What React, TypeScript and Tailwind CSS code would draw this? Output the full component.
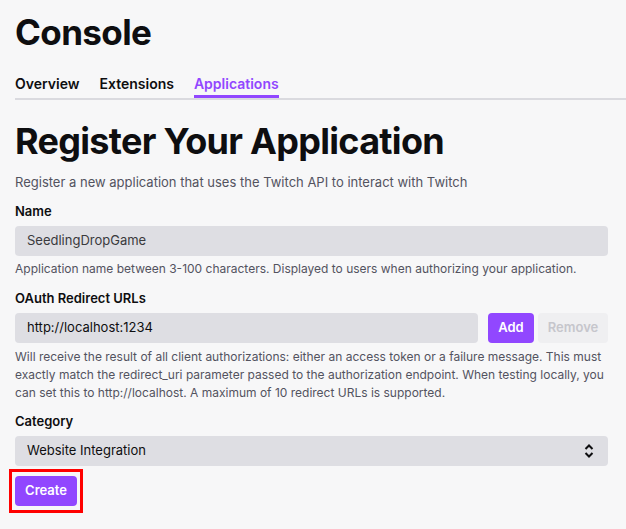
export default function App() {
    return (
        <div className="min-h-[529px] bg-[#f7f7f8] font-['Inter',sans-serif] text-[#0e0e10]">
            <div className="pl-[15px] pr-[18px] pt-[10px]">
                <h1 className="text-[35px] font-bold leading-[44px] tracking-[-0.6px]">Console</h1>

                <div className="mt-[16px] -mr-[18px] flex border-b-2 border-[#dadadf]">
                    <div className="flex gap-[20px] text-[14px] font-semibold leading-[20px]">
                        <div className="pb-[4px] pt-[4px]">Overview</div>
                        <div className="pb-[4px] pt-[4px]">Extensions</div>
                        <div className="pb-[1px] pt-[4px] border-b-[3px] border-[#9147ff] text-[#9147ff]">Applications</div>
                    </div>
                </div>

                <h2 className="mt-[19px] text-[36px] font-bold leading-[44px] tracking-[-0.7px]">Register Your Application</h2>
                <p className="mt-[10px] text-[13px] leading-[18px] text-[#53535f]">
                    Register a new application that uses the Twitch API to interact with Twitch
                </p>

                <label className="mt-[11px] block text-[13px] font-semibold leading-[18px]">Name</label>
                <div className="mt-[6px] flex h-[30px] items-center rounded bg-[#dedee3] px-[12px] text-[13px] text-[#3a3a3d]">
                    SeedlingDropGame
                </div>
                <p className="mt-[4px] text-[12px] leading-[18px] text-[#53535f]">
                    Application name between 3-100 characters. Displayed to users when authorizing your application.
                </p>

                <label className="mt-[11px] block text-[13px] font-semibold leading-[18px]">OAuth Redirect URLs</label>
                <div className="mt-[6px] flex h-[30px] gap-[4px]">
                    <div className="mr-[6px] flex flex-1 items-center rounded bg-[#dedee3] px-[12px] text-[13px] text-[#0e0e10]">
                        http://localhost:1234
                    </div>
                    <button className="h-[30px] w-[46px] rounded bg-[#9147ff] text-[13px] font-semibold text-white">Add</button>
                    <button className="h-[30px] w-[70px] rounded bg-[#efeff1] text-[13px] font-semibold text-[#c6c6cc]">Remove</button>
                </div>
                <p className="mt-[5px] text-[12px] leading-[18px] text-[#53535f]">
                    Will receive the result of all client authorizations: either an access token or a failure message. This must
                    exactly match the redirect_uri parameter passed to the authorization endpoint. When testing locally, you
                    can set this to http://localhost. A maximum of 10 redirect URLs is supported.
                </p>

                <label className="mt-[10px] block text-[13px] font-semibold leading-[18px]">Category</label>
                <div className="mt-[6px] flex h-[30px] items-center justify-between rounded bg-[#dedee3] pl-[12px] pr-[14px] text-[13px] text-[#0e0e10]">
                    <span>Website Integration</span>
                    <svg width="10" height="14" viewBox="0 0 10 14" fill="none" stroke="#0e0e10" strokeWidth="2">
                        <path d="M1.5 5 L5 1.5 L8.5 5" />
                        <path d="M1.5 9 L5 12.5 L8.5 9" />
                    </svg>
                </div>

                <div className="mt-[3px] -ml-[6px] inline-block border-[3px] border-[#ff0000] px-[3px] py-[4px]">
                    <button className="block h-[30px] w-[62px] rounded bg-[#9147ff] text-[13px] font-semibold text-white">Create</button>
                </div>
            </div>
        </div>
    );
}
